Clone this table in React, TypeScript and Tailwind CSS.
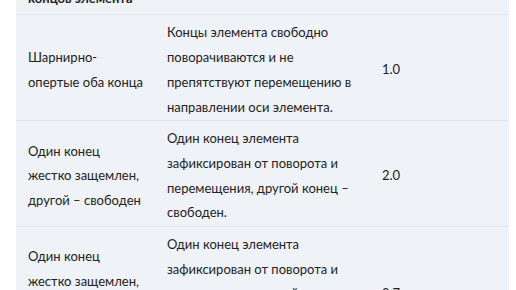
import React from 'react';

const rows = [
  {
    cond: 'Шарнирно-опертые оба конца',
    desc: 'Концы элемента свободно поворачиваются и не препятствуют перемещению в направлении оси элемента.',
    mu: '1.0',
  },
  {
    cond: 'Один конец жестко защемлен, другой – свободен',
    desc: 'Один конец элемента зафиксирован от поворота и перемещения, другой конец – свободен.',
    mu: '2.0',
  },
  {
    cond: 'Один конец жестко защемлен, другой – шарнирно опертый',
    desc: 'Один конец элемента зафиксирован от поворота и перемещения, другой конец – шарнирно закреплен от перемещения.',
    mu: '0.7',
  },
];

const App: React.FC = () => {
  return (
    <div className="h-[290px] w-full overflow-hidden bg-white font-['Lato',sans-serif] text-[13px] leading-[24.7px] text-[#222]">
      <div className="-mt-[41px] pl-[16px] pr-[7px]">
        <table className="w-full table-fixed border-collapse bg-[#eff2f7]">
          <colgroup>
            <col className="w-[139px]" />
            <col className="w-[215px]" />
            <col />
          </colgroup>
          <thead>
            <tr className="border-b border-[#e3e8ef]">
              <th className="pl-[12px] pr-[10px] pt-[2px] pb-[4px] text-left align-middle font-bold">Тип закрепления концов элемента</th>
              <th className="px-[12px] pt-[2px] pb-[4px] text-left align-middle font-bold">Описание</th>
              <th className="px-[12px] pt-[2px] pb-[4px] text-left align-middle font-bold">μ</th>
            </tr>
          </thead>
          <tbody>
            {rows.map((r) => (
              <tr key={r.mu} className="border-b border-[#e3e8ef]">
                <td className="pl-[12px] pr-[10px] pt-[5px] pb-[1px] align-middle">{r.cond}</td>
                <td className="px-[12px] pt-[5px] pb-[1px] align-middle">{r.desc}</td>
                <td className="px-[12px] pt-[5px] pb-[1px] align-middle">{r.mu}</td>
              </tr>
            ))}
          </tbody>
        </table>
      </div>
    </div>
  );
};

export default App;
